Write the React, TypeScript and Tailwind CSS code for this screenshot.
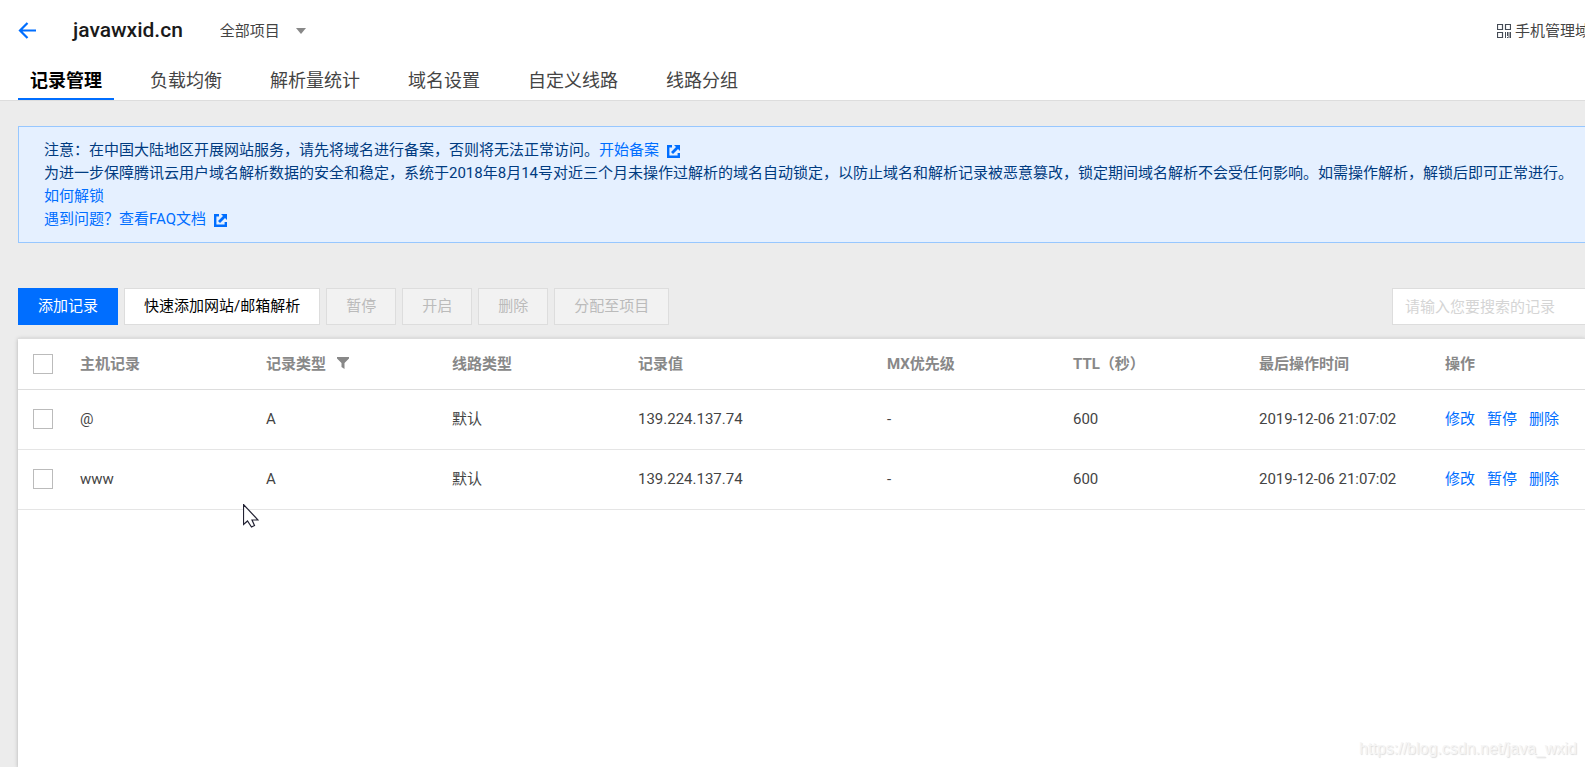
import { useState } from "react";

/**
 * DNS record management page.
 *
 * Header with domain name and tabs, a notice, the record toolbar
 * and the table of records.
 */

interface DnsRecord {
  host: string;
  type: string;
  line: string;
  value: string;
  mx: string;
  ttl: string;
  updatedAt: string;
}

const tabs = ["记录管理", "负载均衡", "解析量统计", "域名设置", "自定义线路", "线路分组"];

const bulkActions = ["暂停", "开启", "删除", "分配至项目"];

const rowActions = ["修改", "暂停", "删除"];

const records: DnsRecord[] = [
  {
    host: "@",
    type: "A",
    line: "默认",
    value: "139.224.137.74",
    mx: "-",
    ttl: "600",
    updatedAt: "2019-12-06 21:07:02",
  },
  {
    host: "www",
    type: "A",
    line: "默认",
    value: "139.224.137.74",
    mx: "-",
    ttl: "600",
    updatedAt: "2019-12-06 21:07:02",
  },
];

function ExternalIcon() {
  return (
    <svg className="ml-2 inline-block h-[13px] w-[13px]" viewBox="0 0 13 13" fill="none">
      <path d="M5 1.200H1.200v10.600h10.600V8" stroke="#006eff" strokeWidth="2.400" />
      <path d="M7 0h6v6l-2-2-5 5-2-2 5-5z" fill="#006eff" />
    </svg>
  );
}

function QrIcon() {
  return (
    <svg className="h-[14px] w-[14px] shrink-0" viewBox="0 0 14 14" fill="none" stroke="#444b55">
      <path d="M.5.5h5v5h-5zM8.500.5h5v5h-5zM.5 8.500h5v5h-5z" strokeWidth="1.200" />
      <path d="M8.500 8v6M10.500 8v4M10.500 13v1M12 8v6M13.500 8v6" />
    </svg>
  );
}

function Checkbox({ label }: { label: string }) {
  return (
    <input
      type="checkbox"
      aria-label={label}
      className="block h-5 w-5 appearance-none border border-[#bbb] bg-white checked:bg-[#006eff]"
    />
  );
}

function Header() {
  const [active, setActive] = useState(tabs[0]);

  return (
    <header className="border-b border-[#ddd] bg-white">
      <div className="flex h-[62px] items-center pl-[18px]">
        <button type="button" aria-label="返回" className="mr-[37px]">
          <svg className="h-[18px] w-[18px]" viewBox="0 0 18 18" fill="none" stroke="#006eff" strokeWidth="2.200">
            <path d="M18 8.500H2.500M9.500 1L2 8.500 9.500 16" />
          </svg>
        </button>
        <h1 className="text-[21px] font-medium text-[#1a1a1a]">javawxid.cn</h1>
        <div className="relative ml-[37px] flex items-center">
          <select aria-label="项目" className="w-[90px] appearance-none bg-transparent text-[#444]">
            <option>全部项目</option>
          </select>
          <svg className="pointer-events-none absolute right-1 h-[6px] w-[10px]" viewBox="0 0 10 6">
            <path d="M0 0h10L5 6z" fill="#888" />
          </svg>
        </div>
        <a href="#mobile" className="ml-auto flex w-[88px] items-center gap-1 overflow-hidden whitespace-nowrap text-[#444]">
          <QrIcon />
          <span>手机管理域名</span>
        </a>
      </div>
      <nav className="flex gap-6 pl-[18px] text-[18px]">
        {tabs.map((tab) => (
          <button
            key={tab}
            type="button"
            onClick={() => setActive(tab)}
            className={
              tab === active
                ? "h-[38px] border-b-2 border-[#006eff] px-3 font-bold text-black"
                : "h-[38px] border-b-2 border-transparent px-3 text-[#444]"
            }
          >
            {tab}
          </button>
        ))}
      </nav>
    </header>
  );
}

function Notice() {
  return (
    <section className="border border-r-0 border-[#97c7ff] bg-[#e5f0ff] pt-3 pb-[11px] pl-[25px] leading-[23px] text-[#003b80]">
      <p>
        注意：在中国大陆地区开展网站服务，请先将域名进行备案，否则将无法正常访问。
        <a href="#beian" className="text-[#006eff]">
          开始备案
          <ExternalIcon />
        </a>
      </p>
      <p>
        为进一步保障腾讯云用户域名解析数据的安全和稳定，系统于2018年8月14号对近三个月未操作过解析的域名自动锁定，以防止域名和解析记录被恶意篡改，锁定期间域名解析不会受任何影响。如需操作解析，解锁后即可正常进行。
        <a href="#unlock" className="block text-[#006eff]">
          如何解锁
        </a>
      </p>
      <p>
        <a href="#faq" className="text-[#006eff]">
          遇到问题？查看FAQ文档
          <ExternalIcon />
        </a>
      </p>
    </section>
  );
}

function Toolbar() {
  return (
    <div className="flex gap-1.5">
      <button type="button" className="h-[37px] border border-[#006eff] bg-[#006eff] px-[19px] text-white">
        添加记录
      </button>
      <button type="button" className="h-[37px] border border-[#ddd] bg-white px-[19px] text-black">
        快速添加网站/邮箱解析
      </button>
      {bulkActions.map((action) => (
        <button
          key={action}
          type="button"
          disabled
          className="h-[37px] border border-[#ddd] bg-[#f2f2f2] px-[19px] text-[#bbb]"
        >
          {action}
        </button>
      ))}
      <input
        type="text"
        aria-label="搜索记录"
        placeholder="请输入您要搜索的记录"
        className="ml-auto h-[37px] w-[193px] border border-r-0 border-[#ddd] bg-white pl-3 text-[#444] placeholder:text-[#d5d5d5]"
      />
    </div>
  );
}

function RecordTable() {
  return (
    <table className="w-full table-fixed text-left">
      <colgroup>
        <col className="w-[62px]" />
        <col className="w-[186px]" />
        <col className="w-[186px]" />
        <col className="w-[186px]" />
        <col className="w-[249px]" />
        <col className="w-[186px]" />
        <col className="w-[186px]" />
        <col className="w-[186px]" />
        <col />
      </colgroup>
      <thead className="text-[#888]">
        <tr className="h-[50px] border-b border-[#ddd]">
          <th scope="col" className="pl-[15px]">
            <Checkbox label="全选" />
          </th>
          <th scope="col">主机记录</th>
          <th scope="col">
            记录类型
            <svg className="ml-[11px] inline-block h-3 w-3 align-baseline" viewBox="0 0 12 12">
              <path d="M0 0h12v1.500L7.500 6v6l-3-2V6L0 1.500z" fill="#888" />
            </svg>
          </th>
          <th scope="col">线路类型</th>
          <th scope="col">记录值</th>
          <th scope="col">MX优先级</th>
          <th scope="col">TTL（秒）</th>
          <th scope="col">最后操作时间</th>
          <th scope="col">操作</th>
        </tr>
      </thead>
      <tbody className="text-[#444]">
        {records.map((record) => (
          <tr key={record.host} className="h-15 border-b border-[#e5e5e5]">
            <td className="pl-[15px]">
              <Checkbox label={record.host} />
            </td>
            <td>{record.host}</td>
            <td>{record.type}</td>
            <td>{record.line}</td>
            <td>{record.value}</td>
            <td>{record.mx}</td>
            <td>{record.ttl}</td>
            <td>{record.updatedAt}</td>
            <td>
              <div className="flex gap-3 text-[#006eff]">
                {rowActions.map((action) => (
                  <a key={action} href="#record" className="whitespace-nowrap">
                    {action}
                  </a>
                ))}
              </div>
            </td>
          </tr>
        ))}
      </tbody>
    </table>
  );
}

export default function App() {
  return (
    <div className="relative flex min-h-screen flex-col overflow-hidden bg-[#ececec] font-['Roboto','Noto_Sans_CJK_SC',sans-serif] text-[15px]">
      <Header />
      <main className="flex flex-1 flex-col pt-[25px] pl-[18px]">
        <Notice />
        <div className="mt-[45px]">
          <Toolbar />
        </div>
        <div className="mt-[13px] flex-1 border-t border-[#ddd] bg-white shadow-[0_1px_4px_rgba(0,0,0,0.25)]">
          <RecordTable />
        </div>
      </main>

      {/* Mouse pointer */}
      <svg className="absolute top-[504px] left-[243px] h-6 w-4" viewBox="0 0 16 24">
        <path
          d="M.5.500v20l4-3.500 4 6 3-1.500-2.500-5.500h6z"
          fill="#fff"
          stroke="#223"
          strokeWidth="1.200"
        />
      </svg>

      <p className="absolute right-2 bottom-1.5 font-['Liberation_Sans',sans-serif] text-[16px] text-[#f5f5f5] [text-shadow:1px_1px_1px_#ddd]">
        https://blog.csdn.net/java_wxid
      </p>
    </div>
  );
}
